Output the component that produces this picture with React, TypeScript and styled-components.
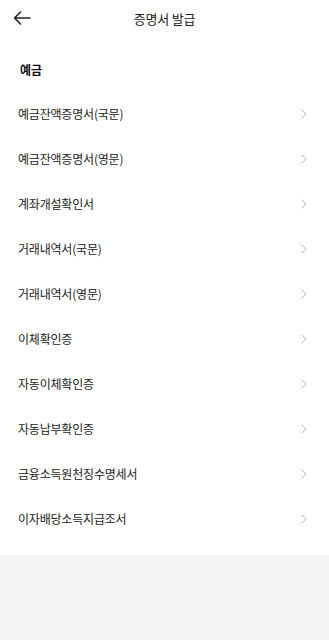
import React from "react";
import styled, { createGlobalStyle } from "styled-components";

const items = [
  "예금잔액증명서(국문)",
  "예금잔액증명서(영문)",
  "계좌개설확인서",
  "거래내역서(국문)",
  "거래내역서(영문)",
  "이체확인증",
  "자동이체확인증",
  "자동납부확인증",
  "금융소득원천징수명세서",
  "이자배당소득지급조서",
];

export default function App() {
  return (
    <>
      <GlobalStyle />
      <Page>
        <Header>
          <BackButton aria-label="back">
            <svg width="18" height="14" viewBox="0 0 18 14" fill="none">
              <path d="M17 7H1.5M7.5 1L1.5 7l6 6" stroke="#222" strokeWidth="1.6" strokeLinecap="round" strokeLinejoin="round" />
            </svg>
          </BackButton>
          <Title>증명서 발급</Title>
        </Header>
        <Section>
          <SectionLabel>예금</SectionLabel>
          <List>
            {items.map((t) => (
              <Row key={t}>
                <RowText>{t}</RowText>
                <svg width="6" height="10" viewBox="0 0 6 10" fill="none">
                  <path d="M1 1l4 4-4 4" stroke="#b8b8b8" strokeWidth="1" strokeLinecap="round" strokeLinejoin="round" />
                </svg>
              </Row>
            ))}
          </List>
        </Section>
      </Page>
    </>
  );
}

const GlobalStyle = createGlobalStyle`
  html, body {
    margin: 0;
    padding: 0;
    background: #f5f5f5;
    font-family: "Noto Sans CJK KR", "Noto Sans", sans-serif;
  }
`;

const Page = styled.div`
  width: 100%;
  min-height: 640px;
  background: #f5f5f5;
`;

const Header = styled.div`
  position: relative;
  height: 36px;
  display: flex;
  align-items: center;
  justify-content: center;
  background: #fff;
`;

const BackButton = styled.button`
  position: absolute;
  left: 13px;
  top: 11px;
  border: none;
  background: transparent;
  padding: 0;
  display: flex;
`;

const Title = styled.div`
  font-size: 13px;
  color: #222;
  letter-spacing: -0.2px;
`;

const Section = styled.div`
  background: #fff;
  padding: 25px 0 14px;
`;

const SectionLabel = styled.div`
  padding: 0 20px;
  height: 18px;
  line-height: 18px;
  font-size: 12px;
  font-weight: 700;
  color: #111;
  margin-bottom: 12px;
`;

const List = styled.div`
  display: flex;
  flex-direction: column;
`;

const Row = styled.div`
  height: 45px;
  display: flex;
  align-items: center;
  justify-content: space-between;
  padding: 0 22px 0 18px;
`;

const RowText = styled.span`
  font-size: 12px;
  color: #222;
  letter-spacing: -0.2px;
`;
